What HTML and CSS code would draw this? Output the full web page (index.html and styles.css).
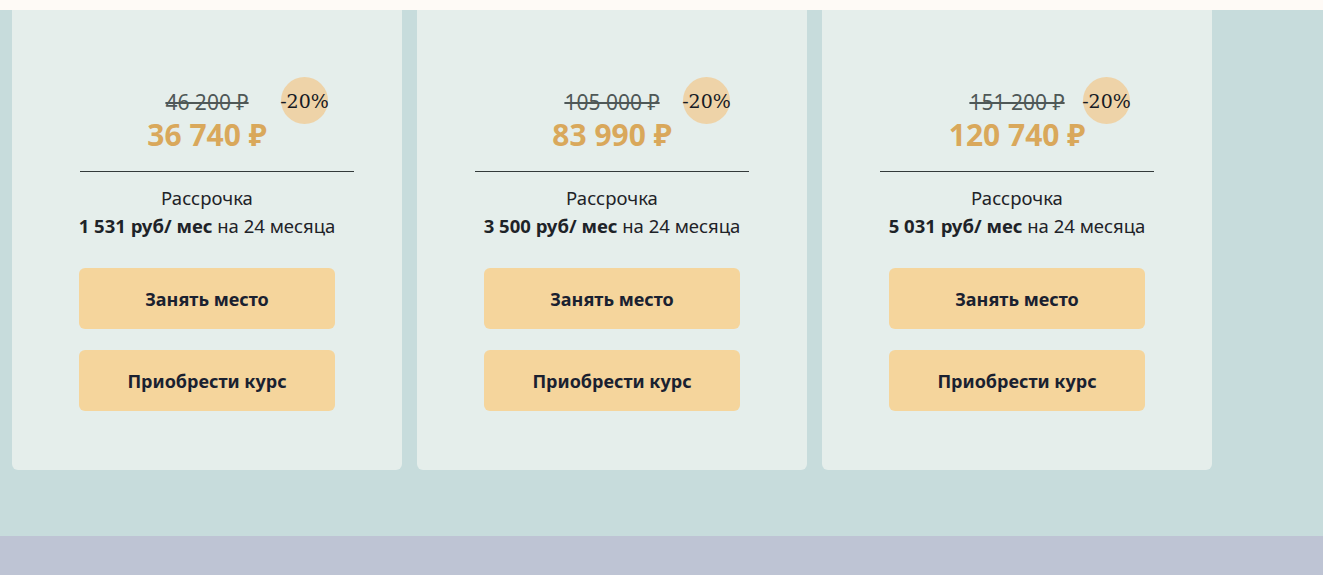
FILE: index.html
```html
<!DOCTYPE html>
<html lang="ru">
<head>
    <meta charset="UTF-8">
    <meta name="viewport" content="width=device-width, initial-scale=1.0">
    <title>Тарифы</title>
    <link rel="stylesheet" href="styles.css">
</head>
<body>
    <div class="top-strip"></div>
    <section class="pricing">
        <div class="cards">
            <div class="card">
                <div class="old-price">46 200 ₽</div>
                <div class="badge">-20%</div>
                <div class="price">36 740 ₽</div>
                <hr class="divider divider-first">
                <p class="plan-title">Рассрочка</p>
                <p class="plan-info"><b>1 531 руб/ мес</b> на 24 месяца</p>
                <button class="btn">Занять место</button>
                <button class="btn">Приобрести курс</button>
            </div>
            <div class="card">
                <div class="old-price">105 000 ₽</div>
                <div class="badge badge-mid">-20%</div>
                <div class="price">83 990 ₽</div>
                <hr class="divider">
                <p class="plan-title">Рассрочка</p>
                <p class="plan-info"><b>3 500 руб/ мес</b> на 24 месяца</p>
                <button class="btn">Занять место</button>
                <button class="btn">Приобрести курс</button>
            </div>
            <div class="card">
                <div class="old-price">151 200 ₽</div>
                <div class="badge badge-last">-20%</div>
                <div class="price">120 740 ₽</div>
                <hr class="divider">
                <p class="plan-title">Рассрочка</p>
                <p class="plan-info"><b>5 031 руб/ мес</b> на 24 месяца</p>
                <button class="btn">Занять место</button>
                <button class="btn">Приобрести курс</button>
            </div>
        </div>
    </section>
    <footer class="bottom-band"></footer>
</body>
</html>
```

FILE: styles.css
```css
body {
    margin: 0;
    font-family: 'Noto Sans', 'Open Sans', sans-serif;
    color: #1e2328;
    background-color: #bec4d4;
}
.top-strip {
    height: 10px;
    background-color: #fefaf6;
}
.pricing {
    background-color: #c7dcdc;
    height: 526px;
    padding: 0 12px;
    box-sizing: border-box;
}
.cards {
    display: flex;
    gap: 15px;
}
.card {
    position: relative;
    width: 390px;
    height: 460px;
    background-color: #e5eeeb;
    border-radius: 0 0 6px 6px;
    padding-top: 80px;
    box-sizing: border-box;
    display: flex;
    flex-direction: column;
    align-items: center;
}
.old-price {
    font-size: 21px;
    line-height: 24px;
    color: #4f5857;
    text-decoration: line-through;
    text-decoration-thickness: 2px;
}
.price {
    margin-top: 3px;
    font-size: 30px;
    line-height: 36px;
    font-weight: 700;
    color: #d9a85b;
}
.badge {
    position: absolute;
    top: 67px;
    left: 269px;
    width: 47px;
    height: 47px;
    border-radius: 50%;
    background-color: #eed3a8;
    display: flex;
    align-items: center;
    justify-content: center;
    font-family: 'DejaVu Serif', serif;
    font-size: 19px;
    color: #161a24;
    white-space: nowrap;
}
.badge-mid {
    left: 266px;
}
.badge-last {
    left: 261px;
}
.divider {
    align-self: flex-start;
    width: 274px;
    margin: 18px 0 0 58px;
    border: none;
    border-top: 1px solid #333a3a;
}
.divider-first {
    margin-left: 68px;
}
.plan-title {
    margin: 12px 0 0;
    font-size: 18.5px;
    line-height: 28px;
}
.plan-info {
    margin: 0;
    font-size: 18.5px;
    line-height: 28px;
}
.btn {
    width: 256px;
    height: 61px;
    margin-top: 21px;
    border: none;
    border-radius: 6px;
    background-color: #f5d59c;
    color: #1a2130;
    font-family: 'Noto Sans', 'Open Sans', sans-serif;
    font-size: 18px;
    font-weight: 700;
    cursor: pointer;
}
.plan-info + .btn {
    margin-top: 28px;
}
```
